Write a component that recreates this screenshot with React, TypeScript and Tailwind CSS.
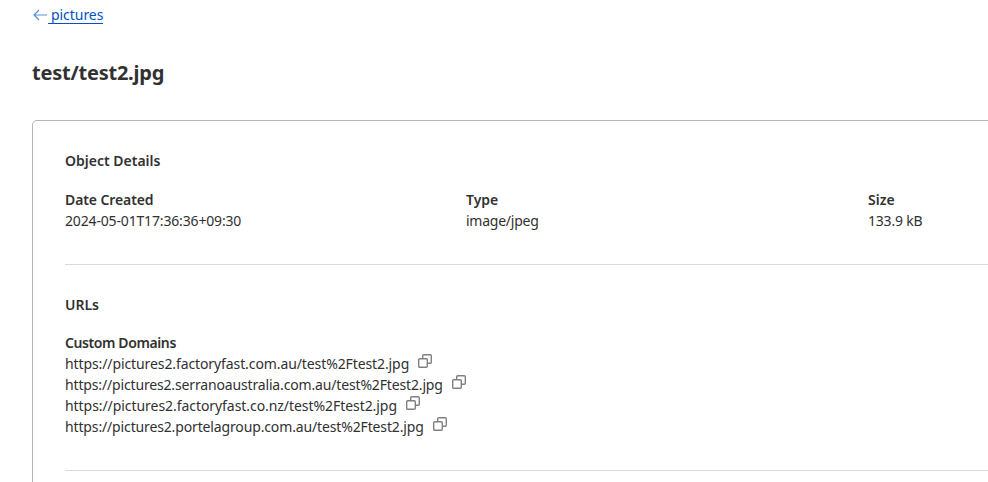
const urls = [
  { href: "https://pictures2.factoryfast.com.au/test%2Ftest2.jpg", spacing: "tracking-[-0.1px]" },
  { href: "https://pictures2.serranoaustralia.com.au/test%2Ftest2.jpg", spacing: "tracking-[-0.155px]" },
  { href: "https://pictures2.factoryfast.co.nz/test%2Ftest2.jpg", spacing: "tracking-[-0.06px]" },
  { href: "https://pictures2.portelagroup.com.au/test%2Ftest2.jpg", spacing: "tracking-[-0.14px]" },
];

const CopyIcon = () => (
  <svg width="14" height="14" viewBox="0 0 14 14" fill="none" stroke="#808080" strokeWidth="1.4" className="block">
    <rect x="0.7" y="4.7" width="8.6" height="8.6" rx="1" />
    <path d="M4.7 4.7V1.7a1 1 0 0 1 1-1h6.6a1 1 0 0 1 1 1v6.6a1 1 0 0 1-1 1H9.3" />
  </svg>
);

const App = () => {
  return (
    <div className="h-[482px] w-[988px] overflow-hidden bg-white pl-8 text-[14px] leading-[21px] text-[#313131] font-['Noto_Sans',sans-serif]">
      <div className="flex h-[31px] items-center pb-[1px]">
        <svg width="16" height="14" viewBox="0 0 16 14" fill="none" stroke="#5b8fd9" strokeWidth="1.2">
          <path d="M15 7H2M7 2 2 7l5 5" />
        </svg>
        <a className="border-b border-[#0051c3] pl-[3px] leading-[17px] tracking-[-0.05px] text-[#0051c3]">pictures</a>
      </div>

      <h1 className="mt-[18px] text-[20px] leading-[48px] font-bold tracking-[-0.23px]">test/test2.jpg</h1>

      <div className="mt-[23px] w-[1270px] rounded-[5px] border border-[#b5b5b5] px-8 pt-[29px] pb-10">
        <h2 className="font-semibold">Object Details</h2>

        <div className="mt-[18px] grid grid-cols-[401px_402px_1fr] pb-[33px]">
          <div>
            <div className="font-semibold tracking-[-0.1px]">Date Created</div>
            <div className="tracking-[-0.16px]">2024-05-01T17:36:36+09:30</div>
          </div>
          <div>
            <div className="font-semibold">Type</div>
            <div className="tracking-[-0.24px]">image/jpeg</div>
          </div>
          <div>
            <div className="font-semibold">Size</div>
            <div className="tracking-[-0.2px]">133.9 kB</div>
          </div>
        </div>

        <div className="border-t border-[#d9d9d9] pt-[29px]">
          <h2 className="font-semibold">URLs</h2>
          <div className="mt-[17px] font-semibold tracking-[-0.4px]">Custom Domains</div>
          {urls.map((url) => (
            <div key={url.href} className="flex items-start">
              <span className={url.spacing}>{url.href}</span>
              <span className="ml-[9px] mt-[1px]">
                <CopyIcon />
              </span>
            </div>
          ))}
        </div>

        <div className="mt-[33px] border-t border-[#d9d9d9]" />
      </div>
    </div>
  );
};

export default App;
